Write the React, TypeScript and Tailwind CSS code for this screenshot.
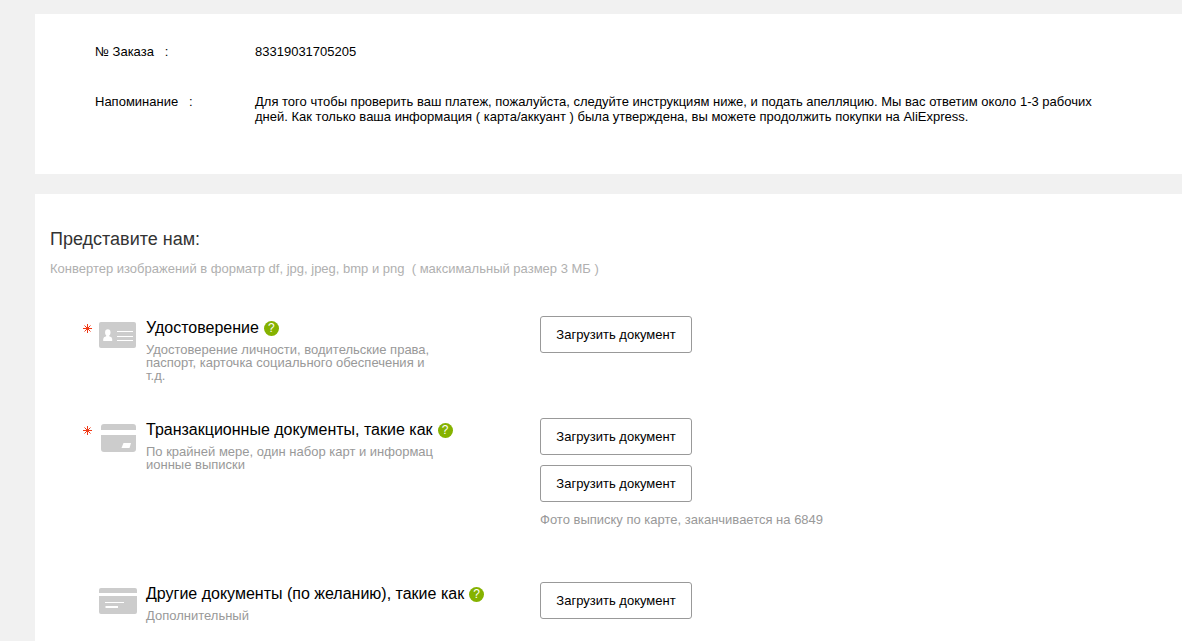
import type { ReactNode } from 'react';

function RequiredMark() {
  return (
    <svg role="img" aria-label="Обязательно" viewBox="0 0 9 9" className="mt-2 h-[9px] w-[9px]" fill="none" stroke="#f03a17" strokeWidth="1">
      <path d="M4.5 0V9M0 4.5H9M1.5 1.5L7.5 7.5M7.5 1.5L1.5 7.5" />
    </svg>
  );
}

function HelpIcon() {
  return (
    <button type="button" aria-label="Справка" className="flex h-[15px] w-[15px] shrink-0 items-center justify-center rounded-full bg-[#85b200] text-[12px] leading-[15px] text-white">
      ?
    </button>
  );
}

function IdCardIcon() {
  return (
    <svg viewBox="0 0 39 30" className="h-[30px] w-[39px]" aria-hidden="true">
      <rect x="1" y="1" width="37" height="26" rx="2" fill="#ccc" />
      <ellipse cx="9.8" cy="11.5" rx="2.7" ry="3.2" fill="#fff" />
      <path d="M5.200 20v-2q0-2 3-2.800v-1.500h3v1.500q3 .8 3 2.800v2z" fill="#fff" />
      <path d="M19 10.500h16M19 15.500h16M19 19.500h16" stroke="#fff" />
    </svg>
  );
}

function BankCardIcon() {
  return (
    <svg viewBox="0 0 39 30" className="h-[30px] w-[39px]" aria-hidden="true">
      <path d="M3 7V4q0-3 3-3h29q3 0 3 3v3zM3 12h35v14q0 3-3 3H6q-3 0-3-3z" fill="#ccc" />
      <path d="M25.500 20H33l-1.500 5H23.500z" fill="#fff" />
    </svg>
  );
}

function OtherCardIcon() {
  return (
    <svg viewBox="0 0 39 30" className="h-[30px] w-[39px]" aria-hidden="true">
      <path d="M1 6V3q0-2 2-2h34q2 0 2 2v3zM1 9h38v16q0 2-2 2H3q-2 0-2-2z" fill="#ccc" />
      <path d="M7 15.500h19" stroke="#fff" strokeWidth="1" />
      <path d="M7.500 20h12.500" stroke="#fff" strokeWidth="2" />
    </svg>
  );
}

function UploadButton() {
  return (
    <button type="button" className="h-[37px] w-[152px] rounded-[3px] border border-[#999] bg-white text-[13px] text-black">
      Загрузить документ
    </button>
  );
}

type RowProps = {
  icon: ReactNode;
  title: string;
  description: string;
  required?: boolean;
  breakAnywhere?: boolean;
  children: ReactNode;
};

function DocumentRow({ icon, title, description, required, breakAnywhere, children }: RowProps) {
  return (
    <section className="flex">
      <div className="flex w-[457px] shrink-0">
        <div className="w-[15px] shrink-0">{required && <RequiredMark />}</div>
        <div className="w-12 shrink-0 pt-[5px]">{icon}</div>
        <div>
          <div className="flex items-center gap-[5px]">
            <h3 className="text-[16px] leading-6 text-black">{title}</h3>
            <HelpIcon />
          </div>
          <p className={`mt-[3px] w-[290px] text-[13px] leading-[13px] text-[#999] ${breakAnywhere ? 'break-all' : ''}`}>
            {description}
          </p>
        </div>
      </div>
      <div className="flex flex-col items-start gap-[10px]">{children}</div>
    </section>
  );
}

export default function App() {
  return (
    <main className="flex min-h-screen flex-col gap-5 bg-[#f1f1f1] pl-[35px] pt-[14px] font-['Liberation_Sans',Arial,sans-serif] text-black">
      <dl className="grid grid-cols-[160px_1fr] gap-y-[35px] bg-white pb-[50px] pl-[60px] pr-10 pt-[30px] text-[13px] leading-[15px]">
        <dt>№ Заказа &nbsp; :</dt>
        <dd>83319031705205</dd>
        <dt>Напоминание &nbsp; :</dt>
        <dd className="max-w-[860px]">
          Для того чтобы проверить ваш платеж, пожалуйста, следуйте инструкциям ниже, и подать апелляцию. Мы вас
          ответим около 1-3 рабочих дней. Как только ваша информация ( карта/аккуант ) была утверждена, вы можете
          продолжить покупки на AliExpress.
        </dd>
      </dl>
      <div className="grow bg-white pb-5 pl-[15px] pt-[33px]">
        <h2 className="text-[18px] leading-6 text-[#333]">Представите нам:</h2>
        <p className="mt-2 text-[13px] leading-5 text-[#b0b0b0]">
          Конвертер изображений в форматр df, jpg, jpeg, bmp и png &nbsp;( максимальный размер 3 МБ )
        </p>
        <div className="flex flex-col gap-9 pl-[33px] pt-[37px]">
          <DocumentRow
            required
            icon={<IdCardIcon />}
            title="Удостоверение"
            description="Удостоверение личности, водительские права, паспорт, карточка социального обеспечения и т.д."
          >
            <UploadButton />
          </DocumentRow>
          <div className="pb-[18px]">
            <DocumentRow
              required
              breakAnywhere
              icon={<BankCardIcon />}
              title="Транзакционные документы, такие как"
              description="По крайней мере, один набор карт и информационные выписки"
            >
              <UploadButton />
              <UploadButton />
              <p className="text-[13px] leading-4 text-[#999]">Фото выписку по карте, заканчивается на 6849</p>
            </DocumentRow>
          </div>
          <DocumentRow
            icon={<OtherCardIcon />}
            title="Другие документы (по желанию), такие как"
            description="Дополнительный"
          >
            <UploadButton />
          </DocumentRow>
        </div>
      </div>
    </main>
  );
}
